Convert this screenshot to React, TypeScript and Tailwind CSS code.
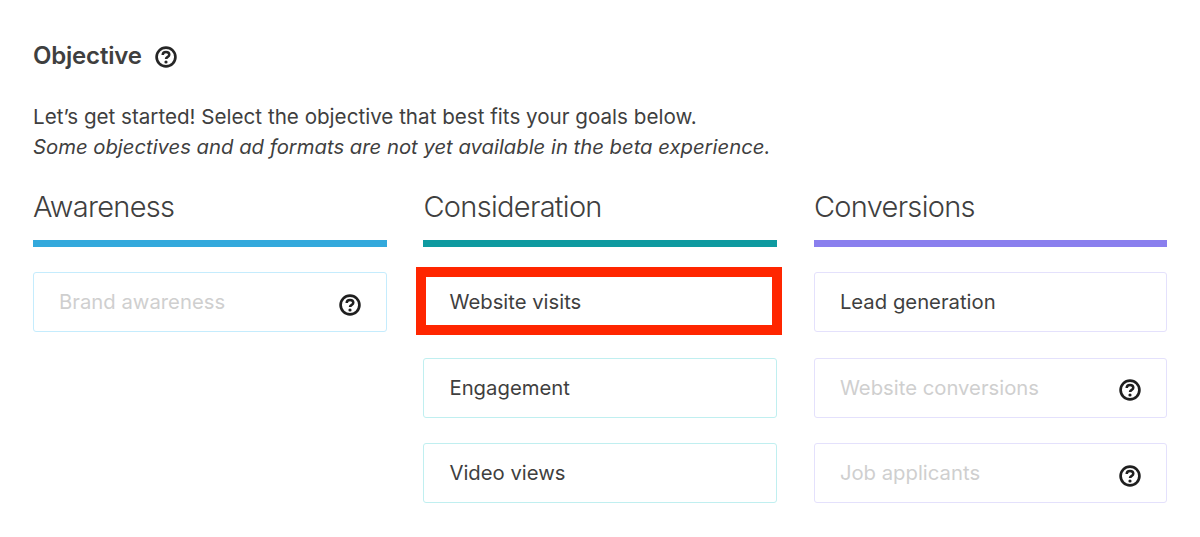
const HelpIcon = ({ className }: { className: string }) => (
  <svg viewBox="0 0 22 22" fill="none" className={className}>
    <circle cx="11" cy="11" r="9.4" stroke="currentColor" strokeWidth="2.7" />
    <path
      d="M7.7 9C7.7 7.1 9.1 6 11 6C12.9 6 14.3 7.1 14.3 8.8C14.3 10.9 11 10.8 11 13.1"
      stroke="currentColor"
      strokeWidth="2.5"
    />
    <circle cx="11" cy="16" r="1.6" fill="currentColor" />
  </svg>
)

type Item = { label: string; disabled?: boolean; highlighted?: boolean }

const columns: {
  title: string
  bar: string
  border: string
  items: Item[]
}[] = [
  {
    title: "Awareness",
    bar: "bg-[#33a9dc]",
    border: "border-[#c5ecfd]",
    items: [{ label: "Brand awareness", disabled: true }],
  },
  {
    title: "Consideration",
    bar: "bg-[#0e9aa0]",
    border: "border-[#c0eff0]",
    items: [
      { label: "Website visits", highlighted: true },
      { label: "Engagement" },
      { label: "Video views" },
    ],
  },
  {
    title: "Conversions",
    bar: "bg-[#8a7fee]",
    border: "border-[#e4e1fc]",
    items: [
      { label: "Lead generation" },
      { label: "Website conversions", disabled: true },
      { label: "Job applicants", disabled: true },
    ],
  },
]

export default function App() {
  return (
    <div className="h-[537px] w-[1200px] overflow-hidden bg-white px-[33px] pt-[39px] font-['Inter',sans-serif] text-[#3f3f3f]">
      <div className="flex h-[34px] items-center gap-[13px]">
        <h2 className="text-[24px] font-semibold leading-[34px] tracking-[-0.2px]">Objective</h2>
        <HelpIcon className="mt-[2px] size-[22px] text-[#262626]" />
      </div>

      <div className="mt-[29px]">
        <p className="text-[20.62px] leading-[30px]">
          Let’s get started! Select the objective that best fits your goals below.
        </p>
        <p className="text-[20.28px] italic leading-[30px]">
          Some objectives and ad formats are not yet available in the beta experience.
        </p>
      </div>

      <div className="mt-[22px] grid grid-cols-[354px_354px_353px] gap-x-[36.45px]">
        {columns.map((col) => (
          <div key={col.title}>
            <h3 className="text-[29px] font-light leading-[46px] tracking-[-0.7px]">{col.title}</h3>
            <div className={`mt-[10px] h-[7px] ${col.bar}`} />
            <div className="mt-[25px] flex flex-col gap-[25.5px]">
              {col.items.map((item) => (
                <div
                  key={item.label}
                  className={`relative flex h-[60px] items-center justify-between rounded-[3px] border px-[25px] text-[20.3px] ${col.border}`}
                >
                  <span className={item.disabled ? "mt-[1px] text-[#cfcfcf]" : "mt-[1px]"}>{item.label}</span>
                  {item.disabled && <HelpIcon className="mt-[5px] size-[22px] text-[#1f1f1f]" />}
                  {item.highlighted && (
                    <div className="absolute -top-[6px] -right-[6px] -bottom-[4px] -left-[8px] border-[10px] border-[#ff2600]" />
                  )}
                </div>
              ))}
            </div>
          </div>
        ))}
      </div>
    </div>
  )
}
